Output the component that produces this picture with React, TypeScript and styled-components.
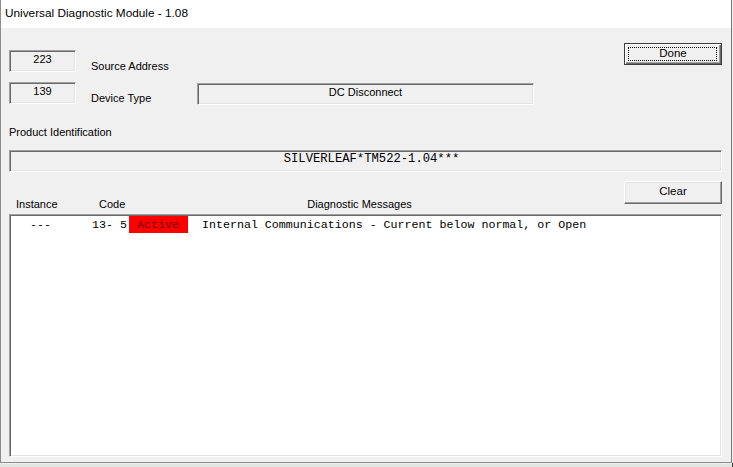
import React from "react";
import styled, { createGlobalStyle, css } from "styled-components";

const Global = createGlobalStyle`
  html, body { margin: 0; padding: 0; }
  body { background: #3a3a3a; font-family: "Liberation Sans", Arial, sans-serif; }
`;

const Screen = styled.div`
  width: 733px;
  height: 467px;
  display: flex;
  flex-direction: column;
  background: #e9ece9;
  overflow: hidden;
`;

const Window = styled.div`
  width: 732px;
  height: 463px;
  box-sizing: border-box;
  border-left: 1px solid #8c8c8c;
  border-right: 1px solid #7a7a7a;
  border-bottom: 1px solid #8c8c8c;
  display: flex;
  flex-direction: column;
  background: #f0f0f0;
`;

const Backdrop = styled.div`
  flex: 1;
  background: linear-gradient(#f0f0f0 0 1px, #e2e6e2 1px);
  border-right: 1px solid #3a3a3a;
`;

const TitleBar = styled.div`
  height: 28px;
  background: #ffffff;
  display: flex;
  align-items: center;
  padding: 0 0 2px 4px;
  box-sizing: border-box;
  font-size: 11.8px;
  color: #000;
`;

const Body = styled.div`
  flex: 1;
  display: flex;
  flex-direction: column;
  padding: 15px 9px 0 8px;
  font-size: 11px;
  color: #000;
`;

const TopRow = styled.div`
  display: flex;
  align-items: flex-start;
  justify-content: space-between;
`;

const Fields = styled.div`
  display: flex;
  flex-direction: column;
  gap: 10px;
  padding-top: 7px;
`;

const FieldRow = styled.div`
  display: flex;
  align-items: flex-start;
`;

const sunken = css`
  box-sizing: border-box;
  border: 1px solid;
  border-color: #a0a0a0 #ffffff #ffffff #a0a0a0;
  box-shadow: inset 1px 1px 0 #696969, inset -1px -1px 0 #e3e3e3;
`;

const ValueBox = styled.div<{ $w: number; $mt?: number; $mono?: boolean }>`
  ${sunken};
  width: ${(p) => p.$w}px;
  height: 22px;
  margin-top: ${(p) => p.$mt ?? 0}px;
  display: flex;
  align-items: center;
  justify-content: center;
  padding-bottom: 4px;
  background: #f0f0f0;
  font-size: ${(p) => (p.$mono ? "12.2px" : "11px")};
  font-family: ${(p) =>
    p.$mono ? '"Liberation Mono", "Courier New", monospace' : '"Liberation Sans", Arial, sans-serif'};
`;

const FieldLabel = styled.div`
  width: 106px;
  margin-left: 15px;
  padding-top: 10px;
  font-size: 11px;
`;

const Button = styled.button<{ $default?: boolean }>`
  width: 98px;
  height: ${(p) => (p.$default ? 22 : 23)}px;
  box-sizing: border-box;
  background: #f0f0f0;
  font-family: "Liberation Sans", Arial, sans-serif;
  font-size: 11.5px;
  color: #000;
  padding: 0 0 3px 0;
  position: relative;
  border: 1px solid;
  border-color: #ffffff #696969 #696969 #ffffff;
  box-shadow: inset -1px -1px 0 #a0a0a0, inset 1px 1px 0 #e3e3e3;
  ${(p) =>
    p.$default &&
    css`
      border: 1px solid #3c3c3c;
      box-shadow: inset 1px 1px 0 #ffffff, inset -1px -1px 0 #696969, inset -2px -2px 0 #a0a0a0;
    `}
`;

const FocusRing = styled.span`
  position: absolute;
  inset: 3px 4px 3px 3px;
  border: 1px dotted #000;
`;

const ProductLabel = styled.div`
  margin-top: 21px;
  height: 13px;
  line-height: 13px;
  font-size: 11px;
`;

const ProductBox = styled(ValueBox)`
  margin-top: 11px;
  padding-left: 12px;
`;

const MidRow = styled.div`
  margin-top: 9px;
  height: 33px;
  display: flex;
  align-items: flex-start;
  justify-content: space-between;
`;

const Headers = styled.div`
  align-self: flex-end;
  display: grid;
  grid-template-columns: 83px 37px 461px;
  padding: 0 0 3px 0;
  font-size: 11px;
  line-height: 13px;
`;

const HeadCell = styled.div<{ $center?: boolean }>`
  padding-left: ${(p) => (p.$center ? 0 : 7)}px;
  text-align: ${(p) => (p.$center ? "center" : "left")};
  white-space: nowrap;
`;

const List = styled.div`
  ${sunken};
  width: 713px;
  height: 243px;
  background: #ffffff;
  padding: 1px 0 0 1px;
`;

const Row = styled.div`
  display: flex;
  align-items: center;
  height: 17px;
  font-family: "Liberation Mono", "Courier New", monospace;
  font-size: 11.65px;
  white-space: pre;
  color: #000;
  padding-bottom: 1px;
`;

const Cell = styled.span<{ $w: number; $pl?: number }>`
  width: ${(p) => p.$w}px;
  padding-left: ${(p) => p.$pl ?? 0}px;
  box-sizing: border-box;
`;

const Status = styled.span`
  width: 59px;
  height: 17px;
  background: #ff0000;
  color: #6e0000;
  display: flex;
  align-items: center;
  padding-left: 8px;
  box-sizing: border-box;
  margin-right: 14px;
`;

export default function App() {
  return (
    <>
      <Global />
      <Screen>
        <Window>
          <TitleBar>Universal Diagnostic Module - 1.08</TitleBar>
          <Body>
            <TopRow>
              <Fields>
                <FieldRow>
                  <ValueBox $w={67}>223</ValueBox>
                  <FieldLabel>Source Address</FieldLabel>
                </FieldRow>
                <FieldRow>
                  <ValueBox $w={67}>139</ValueBox>
                  <FieldLabel>Device Type</FieldLabel>
                  <ValueBox $w={337} $mt={1}>DC Disconnect</ValueBox>
                </FieldRow>
              </Fields>
              <Button $default>
                <FocusRing />
                Done
              </Button>
            </TopRow>
            <ProductLabel>Product Identification</ProductLabel>
            <ProductBox $w={713} $mono>SILVERLEAF*TM522-1.04***</ProductBox>
            <MidRow>
              <Headers>
                <HeadCell>Instance</HeadCell>
                <HeadCell>Code</HeadCell>
                <HeadCell $center>Diagnostic Messages</HeadCell>
              </Headers>
              <Button>Clear</Button>
            </MidRow>
            <List>
              <Row>
                <Cell $w={81} $pl={19}>---</Cell>
                <Cell $w={37}>13- 5</Cell>
                <Status>Active</Status>
                <span>Internal Communications - Current below normal, or Open</span>
              </Row>
            </List>
          </Body>
        </Window>
        <Backdrop />
      </Screen>
    </>
  );
}
